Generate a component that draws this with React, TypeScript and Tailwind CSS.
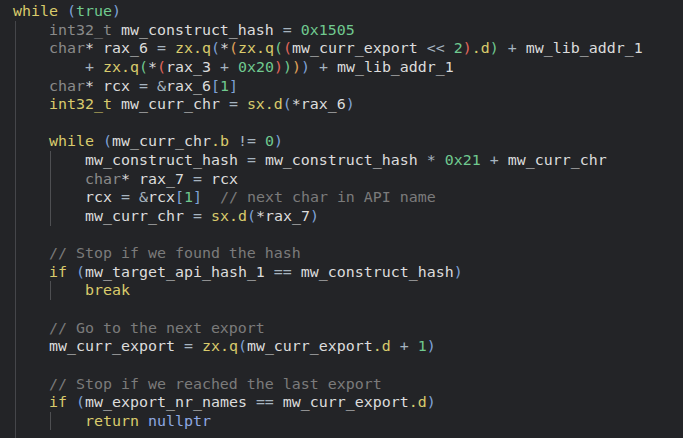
import React from "react";

type Tok = [string, string?];

const C: Record<string, string> = {
  d: "text-[#dcdcdc]",
  k: "text-[#d9cb6c]",
  t: "text-[#8a8a8a]",
  n: "text-[#70c98f]",
  o: "text-[#a6b4c0]",
  c: "text-[#7b7b7b]",
  b: "text-[#8ea8e2]",
  p1: "text-[#7fa2d8]",
  p2: "text-[#e0a35a]",
  p3: "text-[#70c98f]",
  p4: "text-[#e2675c]",
};

type Line = { lvl: number; toks: Tok[] };

const L = (lvl: number, ...toks: Tok[]): Line => ({ lvl, toks });

const lines: Line[] = [
  L(0, ["while", "k"], [" "], ["(", "p1"], ["true", "n"], [")", "p1"]),
  L(1, ["int32_t", "t"], [" mw_construct_hash "], ["=", "o"], [" "], ["0x1505", "n"]),
  L(
    1,
    ["char", "t"], ["*"], [" rax_6 "], ["=", "o"], [" "], ["zx.q", "k"], ["(", "p1"], ["*"], ["(", "p2"],
    ["zx.q", "k"], ["(", "p3"], ["(", "p4"], ["mw_curr_export "], ["<<", "o"], [" "], ["2", "n"], [")", "p4"],
    [".d", "k"], [")", "p3"], [" "], ["+", "o"], [" mw_lib_addr_1"]
  ),
  L(
    1,
    ["    "], ["+", "o"], [" "], ["zx.q", "k"], ["(", "p3"], ["*"], ["(", "p4"], ["rax_3 "], ["+", "o"], [" "],
    ["0x20", "n"], [")", "p4"], [")", "p3"], [")", "p2"], [")", "p1"], [" "], ["+", "o"], [" mw_lib_addr_1"]
  ),
  L(1, ["char", "t"], ["*"], [" rcx "], ["=", "o"], [" "], ["&", "o"], ["rax_6"], ["[", "p1"], ["1", "n"], ["]", "p1"]),
  L(1, ["int32_t", "k"], [" mw_curr_chr "], ["=", "o"], [" "], ["sx.d", "k"], ["(", "p1"], ["*"], ["rax_6"], [")", "p1"]),
  L(1),
  L(1, ["while", "k"], [" "], ["(", "p1"], ["mw_curr_chr"], [".b", "k"], [" "], ["!=", "o"], [" "], ["0", "n"], [")", "p1"]),
  L(2, ["mw_construct_hash "], ["=", "o"], [" mw_construct_hash "], ["*", "o"], [" "], ["0x21", "n"], [" "], ["+", "o"], [" mw_curr_chr"]),
  L(2, ["char", "t"], ["*"], [" rax_7 "], ["=", "o"], [" rcx"]),
  L(2, ["rcx "], ["=", "o"], [" "], ["&", "o"], ["rcx"], ["[", "p1"], ["1", "n"], ["]", "p1"], ["  "], ["// next char in API name", "c"]),
  L(2, ["mw_curr_chr "], ["=", "o"], [" "], ["sx.d", "k"], ["(", "p1"], ["*"], ["rax_7"], [")", "p1"]),
  L(1),
  L(1, ["// Stop if we found the hash", "c"]),
  L(1, ["if", "k"], [" "], ["(", "p1"], ["mw_target_api_hash_1 "], ["==", "o"], [" mw_construct_hash"], [")", "p1"]),
  L(2, ["break", "k"]),
  L(1),
  L(1, ["// Go to the next export", "c"]),
  L(1, ["mw_curr_export "], ["=", "o"], [" "], ["zx.q", "k"], ["(", "p1"], ["mw_curr_export"], [".d", "k"], [" "], ["+", "o"], [" "], ["1", "n"], [")", "p1"]),
  L(1),
  L(1, ["// Stop if we reached the last export", "c"]),
  L(1, ["if", "k"], [" "], ["(", "p1"], ["mw_export_nr_names "], ["==", "o"], [" mw_curr_export"], [".d", "k"], [")", "p1"]),
  L(2, ["return", "k"], [" "], ["nullptr", "b"]),
  L(1),
];

function Guide({ inner }: { inner?: boolean }) {
  return (
    <span className={inner ? "w-[36px] shrink-0 h-full pl-[1px]" : "w-[36px] shrink-0 h-full pl-[2px]"}>
      <span className={inner ? "block h-full border-l border-[#4e4f52]" : "block h-full border-l border-[#45464a]"} />
    </span>
  );
}

export default function App() {
  return (
    <div
      className="w-[683px] h-[438px] overflow-hidden bg-[#232427] pl-[13px] pt-[2px]"
      style={{ fontFamily: '"DejaVu Sans Mono", "Liberation Mono", monospace' }}
    >
      {lines.map((ln, i) => (
        <div key={i} className="flex h-[18.64px] leading-[18.64px] text-[14.95px] whitespace-pre">
          {ln.lvl >= 1 && <Guide />}
          {ln.lvl >= 2 && <Guide inner />}
          <span>
            {ln.toks.map(([s, c], j) => (
              <span key={j} className={C[c ?? "d"]}>
                {s}
              </span>
            ))}
          </span>
        </div>
      ))}
    </div>
  );
}
